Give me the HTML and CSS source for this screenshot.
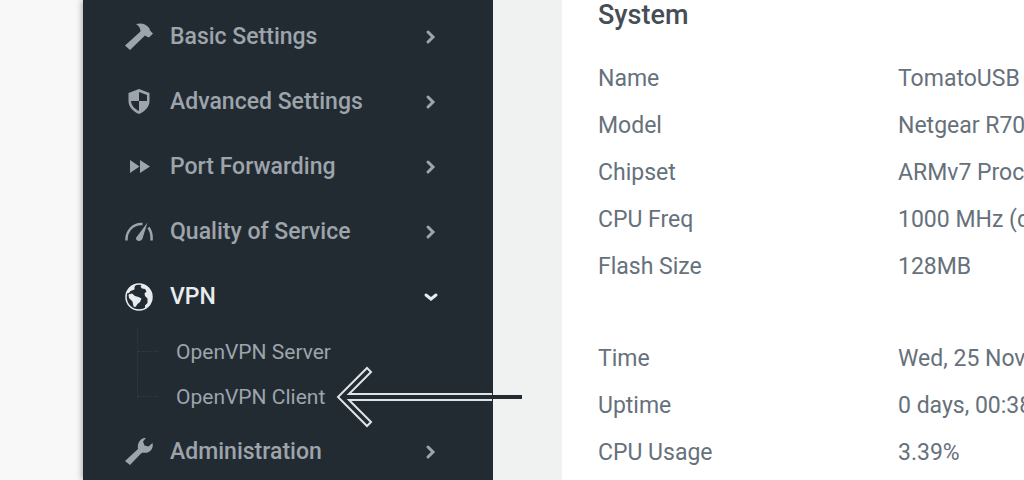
FILE: index.html
```
<!DOCTYPE html>
<html lang="en">
<head>
    <meta charset="UTF-8">
    <meta name="viewport" content="width=device-width, initial-scale=1.0">
    <title>Router Status</title>
    <link rel="stylesheet" href="styles.css">
</head>
<body>
    <nav class="sidebar">
        <ul class="menu">
            <li>
                <a class="menu__link" href="#">
                    <svg class="menu__icon" viewBox="0 0 28 28"><path d="M11 1C17 -.5 21 1 24.500 5.500L25 7.500 28 10.500 24 14.500 21.500 13.500 20 12.500 5 27 0 22.500 15.500 8.500C15.500 5 14 3 11 1Z"/></svg>
                    <span>Basic Settings</span>
                    <svg class="menu__arrow" viewBox="0 0 16 16"><path d="M5 3l5 5-5 5"/></svg>
                </a>
            </li>
            <li>
                <a class="menu__link" href="#">
                    <svg class="menu__icon" viewBox="0 0 28 28"><path fill-rule="evenodd" d="M14 1L24.500 5V13C24.500 19 20 23.500 14 26 8 23.500 3.500 19 3.500 13V5ZM14 4V13H22V7ZM14 13H6C6.500 18 10 21 14 23Z"/></svg>
                    <span>Advanced Settings</span>
                    <svg class="menu__arrow" viewBox="0 0 16 16"><path d="M5 3l5 5-5 5"/></svg>
                </a>
            </li>
            <li>
                <a class="menu__link" href="#">
                    <svg class="menu__icon" viewBox="0 0 28 28"><path d="M5 7L14.500 13.500 5 20ZM15 7L25 13.500 15 20Z"/></svg>
                    <span>Port Forwarding</span>
                    <svg class="menu__arrow" viewBox="0 0 16 16"><path d="M5 3l5 5-5 5"/></svg>
                </a>
            </li>
            <li>
                <a class="menu__link" href="#">
                    <svg class="menu__icon" viewBox="0 0 28 28"><path d="M22.500 4.500L17.500 20.500C16.500 24 11 23.500 11 20.500 11 19.500 11.500 19 12 18.500Z"/><path class="menu__stroke" d="M1.500 22.500C1 13 8 5.500 17.500 6M23.500 9.500C26 13 27 17 26.500 22.500"/></svg>
                    <span>Quality of Service</span>
                    <svg class="menu__arrow" viewBox="0 0 16 16"><path d="M5 3l5 5-5 5"/></svg>
                </a>
            </li>
            <li>
                <a class="menu__link menu__link--active" href="#" aria-expanded="true">
                    <svg class="menu__icon" viewBox="0 0 28 28"><circle class="menu__ring" cx="14" cy="14" r="13"/><path d="M1.500 10C3 5 7 2 11 1.500L9.500 4 9.500 6.500 5.500 8 4 10ZM3.500 11.500L7 10.500 10 13 13.500 14 16.500 15.500 15 19 12.500 21 10.500 24 8.500 23.500 7.500 18.500 4 15ZM17 1.500C22 2 27 7 27 14 27 19 24 23 20 25.500L20 22.500 22.500 20 22.500 15.500 20 13 19.500 10.500 21.500 8.500 20 6 17 5.500 15.500 3.500Z"/></svg>
                    <span>VPN</span>
                    <svg class="menu__arrow" viewBox="0 0 16 16"><path d="M3 6l5 4 5-4"/></svg>
                </a>
                <ul class="submenu">
                    <li><a class="submenu__link" href="#">OpenVPN Server</a></li>
                    <li><a class="submenu__link" href="#">OpenVPN Client</a></li>
                </ul>
            </li>
            <li>
                <a class="menu__link" href="#">
                    <svg class="menu__icon" viewBox="0 0 28 28"><path d="M0 23L13 11C12 5 15.500 -.5 21 0L18 3.500 19.500 7.500 23.500 8.500 27.500 5C29 11 24 16 18 14.500L16 15.500 5 27Z"/></svg>
                    <span>Administration</span>
                    <svg class="menu__arrow" viewBox="0 0 16 16"><path d="M5 3l5 5-5 5"/></svg>
                </a>
            </li>
        </ul>
    </nav>

    <main class="content">
        <h2 class="content__title">System</h2>
        <table class="status">
            <tbody>
                <tr><th scope="row">Name</th><td>TomatoUSB</td></tr>
                <tr><th scope="row">Model</th><td>Netgear R7000</td></tr>
                <tr><th scope="row">Chipset</th><td>ARMv7 Processor rev 0 (v7l)</td></tr>
                <tr><th scope="row">CPU Freq</th><td>1000 MHz (dual-core)</td></tr>
                <tr><th scope="row">Flash Size</th><td>128MB</td></tr>
            </tbody>
        </table>
        <table class="status">
            <tbody>
                <tr><th scope="row">Time</th><td>Wed, 25 Nov 2020</td></tr>
                <tr><th scope="row">Uptime</th><td>0 days, 00:38:12</td></tr>
                <tr><th scope="row">CPU Usage</th><td>3.39%</td></tr>
            </tbody>
        </table>
    </main>

    <svg class="pointer" viewBox="0 0 190 64" aria-hidden="true">
        <path class="pointer__edge" d="M156 29H13L35 7 31 3 2 32 31 61 35 57 13 35H156"/>
        <path class="pointer__shaft" d="M14 32H186"/>
    </svg>
</body>
</html>
```

FILE: styles.css
```
* {
    box-sizing: border-box;
}

body {
    display: flex;
    position: relative;
    height: 100vh;
    margin: 0;
    padding-left: 83px;
    overflow: hidden;
    background: linear-gradient(to right, #f8f8f8 83px, #f0f2f2 83px);
    color: #66717b;
    font-family: Roboto, sans-serif;
    font-size: 23px;
}

ul {
    margin: 0;
    padding: 0;
    list-style: none;
}

a {
    color: inherit;
    text-decoration: none;
}

.sidebar {
    flex: 0 0 410px;
    padding: 4px 54px 0 42px;
    overflow: hidden;
    background-color: #232b32;
    box-shadow: -1px 0 6px rgba(35, 50, 60, 0.4);
    clip-path: inset(0 0 0 -12px);
    color: #9da4ab;
}

.menu__link {
    display: flex;
    align-items: center;
    height: 65px;
    font-weight: 500;
}

.menu__link--active {
    color: #e8ecef;
}

.menu__icon {
    width: 28px;
    height: 28px;
    margin-right: 17px;
    fill: currentColor;
}

.menu__stroke,
.menu__ring {
    fill: none;
    stroke: currentColor;
    stroke-width: 2.5;
}

.menu__ring {
    stroke-width: 1.5;
}

.menu__arrow {
    width: 16px;
    height: 16px;
    margin-left: auto;
    fill: none;
    stroke: currentColor;
    stroke-width: 3;
    stroke-linecap: round;
}

.submenu {
    padding-left: 12px;
}

.submenu__link {
    display: flex;
    align-items: center;
    height: 45px;
    font-size: 21px;
}

.submenu li {
    border-left: 1px dotted #303940;
}

.submenu li:last-child {
    border-image: linear-gradient(#2b343b 55%, transparent 55%) 1;
}

.submenu__link::before {
    content: "";
    width: 20px;
    margin-right: 18px;
    border-top: 1px dotted #343d45;
}

.content {
    flex: 1;
    min-width: 0;
    margin-left: 69px;
    padding-left: 36px;
    overflow: hidden;
    background-color: #fff;
}

.content__title {
    margin: 0 0 25px;
    color: #454d55;
    font-size: 27px;
    font-weight: 500;
    line-height: 30px;
}

.status {
    margin-bottom: 45px;
    border-collapse: collapse;
    white-space: nowrap;
}

.status:last-child {
    margin-bottom: 0;
}

.status th,
.status td {
    height: 47px;
    padding: 0;
    font-weight: 400;
    text-align: left;
}

.status th {
    min-width: 300px;
}

/* Callout arrow lying over the menu */
.pointer {
    position: absolute;
    top: 365px;
    left: 336px;
    width: 190px;
    height: 64px;
}

.pointer path {
    fill: none;
}

.pointer__edge {
    stroke: #e0e4e6;
    stroke-width: 2;
}

.pointer__shaft {
    stroke: #232b32;
    stroke-width: 4;
}
```
